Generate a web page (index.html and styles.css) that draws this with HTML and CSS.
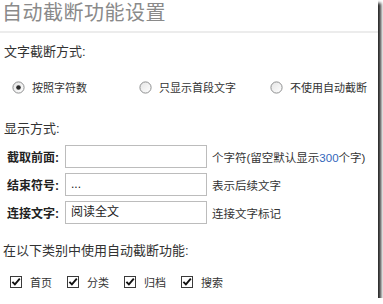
FILE: index.html
```html
<!DOCTYPE html>
<html lang="zh-CN">
<head>
    <meta charset="UTF-8">
    <title>自动截断功能设置</title>
    <link rel="stylesheet" href="styles.css">
</head>
<body>
    <div class="panel">
        <h1 class="title">自动截断功能设置</h1>

        <div class="section-title">文字截断方式:</div>
        <div class="radio-row">
            <label class="radio-item first">
                <svg class="radio" width="13" height="13" viewBox="0 0 13 13">
                    <defs>
                        <linearGradient id="rg" x1="0" y1="0" x2="1" y2="1">
                            <stop offset="0" stop-color="#e4e4e4"/>
                            <stop offset="1" stop-color="#ffffff"/>
                        </linearGradient>
                    </defs>
                    <circle cx="6.5" cy="6.5" r="5.6" fill="url(#rg)" stroke="#8e8f90"/>
                    <circle cx="6.5" cy="6.5" r="2.3" fill="#2a2a2a"/>
                </svg>
                <span>按照字符数</span>
            </label>
            <label class="radio-item second">
                <svg class="radio" width="13" height="13" viewBox="0 0 13 13">
                    <circle cx="6.5" cy="6.5" r="5.6" fill="url(#rg)" stroke="#8e8f90"/>
                </svg>
                <span>只显示首段文字</span>
            </label>
            <label class="radio-item">
                <svg class="radio" width="13" height="13" viewBox="0 0 13 13">
                    <circle cx="6.5" cy="6.5" r="5.6" fill="url(#rg)" stroke="#8e8f90"/>
                </svg>
                <span>不使用自动截断</span>
            </label>
        </div>

        <div class="section-title display-title">显示方式:</div>
        <div class="form-rows">
            <div class="form-row">
                <span class="row-label">截取前面:</span>
                <span class="text-box"></span>
                <span class="hint">个字符(留空默认显示<em>300</em>个字)</span>
            </div>
            <div class="form-row">
                <span class="row-label">结束符号:</span>
                <span class="text-box">...</span>
                <span class="hint">表示后续文字</span>
            </div>
            <div class="form-row">
                <span class="row-label">连接文字:</span>
                <span class="text-box">阅读全文</span>
                <span class="hint">连接文字标记</span>
            </div>
        </div>

        <div class="section-title category-title">在以下类别中使用自动截断功能:</div>
        <div class="check-row">
            <label class="check-item">
                <svg class="check" width="12" height="12" viewBox="0 0 12 12">
                    <rect x="0.5" y="0.5" width="11" height="11" fill="#fff" stroke="#3a3a3a"/>
                    <path d="M2.4 5.8 L4.9 8.4 L9.8 2.6" fill="none" stroke="#111" stroke-width="1.9"/>
                </svg>
                <span>首页</span>
            </label>
            <label class="check-item">
                <svg class="check" width="12" height="12" viewBox="0 0 12 12">
                    <rect x="0.5" y="0.5" width="11" height="11" fill="#fff" stroke="#3a3a3a"/>
                    <path d="M2.4 5.8 L4.9 8.4 L9.8 2.6" fill="none" stroke="#111" stroke-width="1.9"/>
                </svg>
                <span>分类</span>
            </label>
            <label class="check-item">
                <svg class="check" width="12" height="12" viewBox="0 0 12 12">
                    <rect x="0.5" y="0.5" width="11" height="11" fill="#fff" stroke="#3a3a3a"/>
                    <path d="M2.4 5.8 L4.9 8.4 L9.8 2.6" fill="none" stroke="#111" stroke-width="1.9"/>
                </svg>
                <span>归档</span>
            </label>
            <label class="check-item">
                <svg class="check" width="12" height="12" viewBox="0 0 12 12">
                    <rect x="0.5" y="0.5" width="11" height="11" fill="#fff" stroke="#3a3a3a"/>
                    <path d="M2.4 5.8 L4.9 8.4 L9.8 2.6" fill="none" stroke="#111" stroke-width="1.9"/>
                </svg>
                <span>搜索</span>
            </label>
        </div>
    </div>
</body>
</html>
```

FILE: styles.css
```css
body {
    margin: 0;
    background-color: #ffffff;
    font-family: "Liberation Sans", "Noto Sans CJK SC", sans-serif;
    color: #333;
}

.panel {
    width: 378px;
    height: 298px;
    background: white;
    box-shadow: 3px 3px 3px rgba(0, 0, 0, 0.85);
    overflow: hidden;
}

.title {
    margin: 0;
    height: 31px;
    padding-left: 2px;
    font-size: 20px;
    font-weight: normal;
    line-height: 27px;
    color: #8a8a8a;
    letter-spacing: 0.5px;
    border-bottom: 2px solid #ececec;
}

.section-title {
    margin-top: 9px;
    padding-left: 4px;
    font-size: 13px;
    line-height: 20px;
    color: #333;
}

.radio-row {
    display: flex;
    align-items: center;
    height: 20px;
    margin-top: 15px;
    padding-left: 12px;
    font-size: 11px;
}

.radio-item {
    display: flex;
    align-items: center;
    gap: 7px;
}

.radio-item.first {
    width: 127px;
}

.radio-item.second {
    width: 131px;
}

.display-title {
    margin-top: 22px;
}

.form-rows {
    display: flex;
    flex-direction: column;
    gap: 5px;
    margin-top: 6px;
}

.form-row {
    display: flex;
    align-items: center;
    height: 23px;
    padding-left: 7px;
}

.row-label {
    width: 58px;
    font-size: 12px;
    font-weight: bold;
    color: #222;
}

.text-box {
    box-sizing: border-box;
    width: 142px;
    height: 23px;
    padding-left: 5px;
    border: 1px solid #bcbcbc;
    font-size: 12px;
    line-height: 21px;
    color: #222;
}

.hint {
    margin-left: 5px;
    font-size: 11.5px;
    color: #333;
}

.hint em {
    font-style: normal;
    color: #3366bb;
}

.category-title {
    margin-top: 17px;
    padding-left: 3px;
}

.check-row {
    display: flex;
    align-items: center;
    height: 16px;
    margin-top: 13px;
    padding-left: 10px;
    font-size: 11px;
}

.check-item {
    display: flex;
    align-items: center;
    gap: 8px;
    width: 57px;
}
```
